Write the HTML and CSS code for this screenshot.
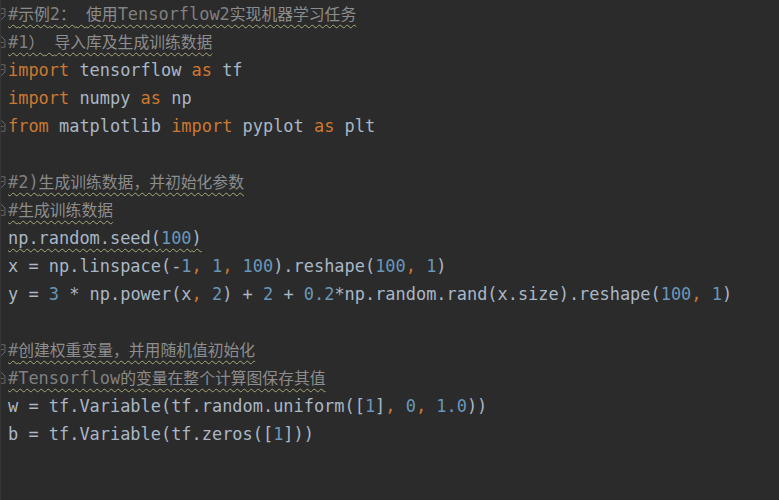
FILE: index.html
```html
<!DOCTYPE html>
<html lang="zh">
<head>
<meta charset="utf-8">
<title>Tensorflow 示例</title>
<link rel="stylesheet" href="styles.css">
</head>
<body>
<div class="editor">
  <div class="line"><span class="gutter"><svg class="fold" viewBox="0 0 8 28"><path d="M0 8 H4.5 V16.5 L0 20.5 M0 13.5 H3"/></svg></span><span class="code"><span class="cm"><span class="wavy">#<span class="zh">示例</span>2<span class="zh">：</span> <span class="zh">使用</span>Tensorflow2<span class="zh">实现机器学习任务</span></span></span></span></div>
  <div class="line"><span class="gutter"><svg class="fold" viewBox="0 0 8 28"><path d="M0 7.5 L4.5 11.5 V20 H0 M0 14.5 H3"/></svg></span><span class="code"><span class="cm"><span class="wavy">#1<span class="zh">）</span> <span class="zh">导入库及生成训练数据</span></span></span></span></div>
  <div class="line"><span class="gutter"><svg class="fold" viewBox="0 0 8 28"><path d="M0 8 H4.5 V16.5 L0 20.5 M0 13.5 H3"/></svg></span><span class="code"><span class="kw">import</span> tensorflow <span class="kw">as</span> tf</span></div>
  <div class="line"><span class="gutter"></span><span class="code"><span class="kw">import</span> numpy <span class="kw">as</span> np</span></div>
  <div class="line"><span class="gutter"><svg class="fold" viewBox="0 0 8 28"><path d="M0 7.5 L4.5 11.5 V20 H0 M0 14.5 H3"/></svg></span><span class="code"><span class="kw">from</span> matplotlib <span class="kw">import</span> pyplot <span class="kw">as</span> plt</span></div>
  <div class="line"><span class="gutter"></span><span class="code"></span></div>
  <div class="line"><span class="gutter"><svg class="fold" viewBox="0 0 8 28"><path d="M0 8 H4.5 V16.5 L0 20.5 M0 13.5 H3"/></svg></span><span class="code"><span class="cm"><span class="wavy">#2)<span class="zh">生成训练数据，并初始化参数</span></span></span></span></div>
  <div class="line"><span class="gutter"><svg class="fold" viewBox="0 0 8 28"><path d="M0 7.5 L4.5 11.5 V20 H0 M0 14.5 H3"/></svg></span><span class="code"><span class="cm"><span class="wavy">#<span class="zh">生成训练数据</span></span></span></span></div>
  <div class="line"><span class="gutter"></span><span class="code"><span class="wavy">np.random.seed(<span class="num">100</span>)</span></span></div>
  <div class="line"><span class="gutter"></span><span class="code">x = np.linspace(-<span class="num">1</span><span class="kw">,</span> <span class="num">1</span><span class="kw">,</span> <span class="num">100</span>).reshape(<span class="num">100</span><span class="kw">,</span> <span class="num">1</span>)</span></div>
  <div class="line"><span class="gutter"></span><span class="code">y = <span class="num">3</span> * np.power(x<span class="kw">,</span> <span class="num">2</span>) + <span class="num">2</span> + <span class="num">0.2</span>*np.random.rand(x.size).reshape(<span class="num">100</span><span class="kw">,</span> <span class="num">1</span>)</span></div>
  <div class="line"><span class="gutter"></span><span class="code"></span></div>
  <div class="line"><span class="gutter"><svg class="fold" viewBox="0 0 8 28"><path d="M0 8 H4.5 V16.5 L0 20.5 M0 13.5 H3"/></svg></span><span class="code"><span class="cm"><span class="wavy">#<span class="zh">创建权重变量，并用随机值初始化</span></span></span></span></div>
  <div class="line"><span class="gutter"><svg class="fold" viewBox="0 0 8 28"><path d="M0 7.5 L4.5 11.5 V20 H0 M0 14.5 H3"/></svg></span><span class="code"><span class="cm"><span class="wavy">#Tensorflow<span class="zh">的变量在整个计算图保存其值</span></span></span></span></div>
  <div class="line"><span class="gutter"></span><span class="code">w = tf.Variable(tf.random.uniform([<span class="num">1</span>]<span class="kw">,</span> <span class="num">0</span><span class="kw">,</span> <span class="num">1.0</span>))</span></div>
  <div class="line"><span class="gutter"></span><span class="code">b = tf.Variable(tf.zeros([<span class="num">1</span>]))</span></div>
</div>
</body>
</html>
```

FILE: styles.css
```css
html, body {
  margin: 0;
  padding: 0;
  background: #2b2b2b;
  height: 100%;
}

.editor {
  display: flex;
  flex-direction: column;
  min-height: 500px;
  border-left: 1px solid #363636;
  box-sizing: border-box;
  font-family: "DejaVu Sans Mono", "Noto Sans CJK SC", monospace;
  font-size: 16.95px;
  color: #a9b7c6;
}

.line {
  display: flex;
  height: 28px;
  line-height: 28px;
  white-space: pre;
}

.gutter {
  width: 7px;
  flex: none;
  display: flex;
}

.fold {
  width: 8px;
  height: 28px;
  fill: none;
  stroke: #6f7173;
  stroke-width: 1;
}

.code {
  flex: 1;
}

.kw {
  color: #cc7832;
}

.num {
  color: #6897bb;
}

.cm {
  color: #808080;
}

.zh {
  font-family: "Noto Sans CJK SC", sans-serif;
  font-size: 15.8px;
  color: #8d8d8d;
}

.wavy {
  text-decoration: underline wavy #a9a77a;
  text-decoration-thickness: 1px;
  text-underline-offset: 4px;
}
```
